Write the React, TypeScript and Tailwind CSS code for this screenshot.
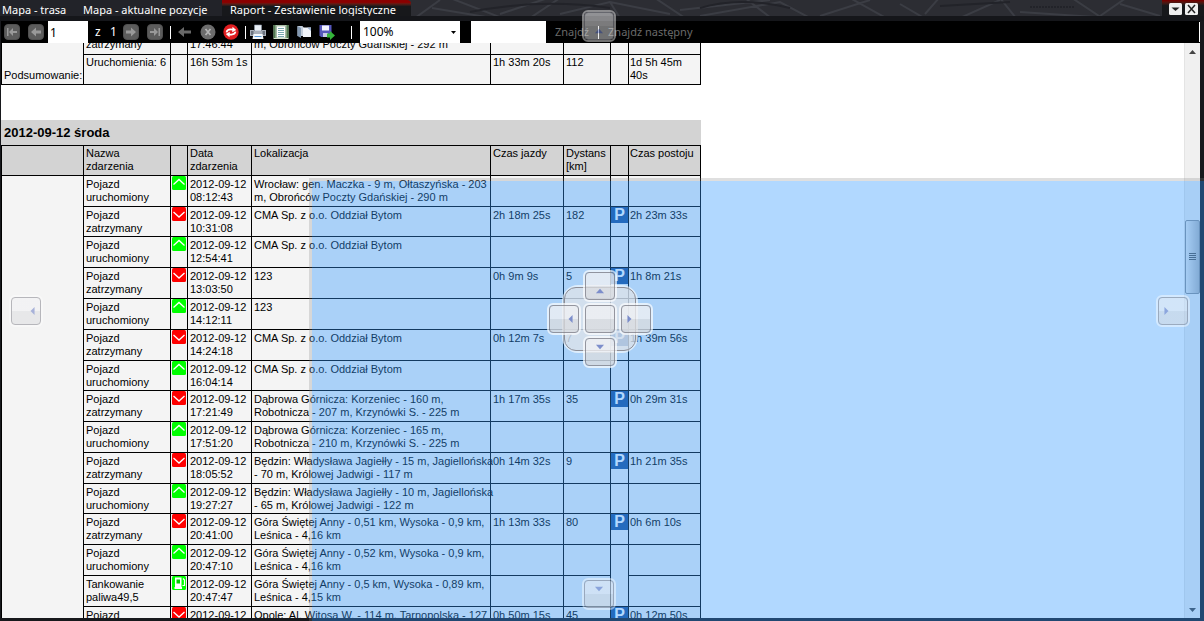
import React from "react";

type EventKind = "start" | "stop" | "fuel";

interface TripEvent {
  kind: EventKind;
  name: [string, string];
  time: string;
  place: string[];
  drive?: string;
  km?: string;
  stay?: string;
  compact?: boolean;
}

const STARTED: [string, string] = ["Pojazd", "uruchomiony"];
const STOPPED: [string, string] = ["Pojazd", "zatrzymany"];

const events: TripEvent[] = [
  { kind: "start", name: STARTED, time: "08:12:43", place: ["Wrocław: gen. Maczka - 9 m, Ołtaszyńska - 203", "m, Obrońców Poczty Gdańskiej - 290 m"] },
  { kind: "stop", name: STOPPED, time: "10:31:08", place: ["CMA Sp. z o.o. Oddział Bytom"], drive: "2h 18m 25s", km: "182", stay: "2h 23m 33s", compact: true },
  { kind: "start", name: STARTED, time: "12:54:41", place: ["CMA Sp. z o.o. Oddział Bytom"] },
  { kind: "stop", name: STOPPED, time: "13:03:50", place: ["123"], drive: "0h 9m 9s", km: "5", stay: "1h 8m 21s" },
  { kind: "start", name: STARTED, time: "14:12:11", place: ["123"] },
  { kind: "stop", name: STOPPED, time: "14:24:18", place: ["CMA Sp. z o.o. Oddział Bytom"], drive: "0h 12m 7s", km: "7", stay: "1h 39m 56s" },
  { kind: "start", name: STARTED, time: "16:04:14", place: ["CMA Sp. z o.o. Oddział Bytom"], compact: true },
  { kind: "stop", name: STOPPED, time: "17:21:49", place: ["Dąbrowa Górnicza: Korzeniec - 160 m,", "Robotnicza - 207 m, Krzynówki S. - 225 m"], drive: "1h 17m 35s", km: "35", stay: "0h 29m 31s" },
  { kind: "start", name: STARTED, time: "17:51:20", place: ["Dąbrowa Górnicza: Korzeniec - 165 m,", "Robotnicza - 210 m, Krzynówki S. - 225 m"] },
  { kind: "stop", name: STOPPED, time: "18:05:52", place: ["Będzin: Władysława Jagiełły - 15 m, Jagiellońska", "- 70 m, Królowej Jadwigi - 117 m"], drive: "0h 14m 32s", km: "9", stay: "1h 21m 35s" },
  { kind: "start", name: STARTED, time: "19:27:27", place: ["Będzin: Władysława Jagiełły - 10 m, Jagiellońska", "- 65 m, Królowej Jadwigi - 122 m"], compact: true },
  { kind: "stop", name: STOPPED, time: "20:41:00", place: ["Góra Świętej Anny - 0,51 km, Wysoka - 0,9 km,", "Leśnica - 4,16 km"], drive: "1h 13m 33s", km: "80", stay: "0h 6m 10s" },
  { kind: "start", name: STARTED, time: "20:47:10", place: ["Góra Świętej Anny - 0,52 km, Wysoka - 0,9 km,", "Leśnica - 4,16 km"] },
  { kind: "fuel", name: ["Tankowanie", "paliwa49,5"], time: "20:47:47", place: ["Góra Świętej Anny - 0,5 km, Wysoka - 0,89 km,", "Leśnica - 4,15 km"] },
  { kind: "stop", name: ["Pojazd", ""], time: "", place: ["Opole: Al. Witosa W. - 114 m, Tarnopolska - 127"], drive: "0h 50m 15s", km: "45", stay: "0h 12m 50s" },
];

const edges = "border-r border-b border-black text-left align-top font-normal whitespace-nowrap";
const headCell = `${edges} pt-px pl-0.5`;
const bodyCell = `${edges} pt-0.5 pl-0.5`;

function Lines({ items }: { items: string[] }) {
  return (
    <>
      {items.map((t, i) => (
        <div key={i}>{t}</div>
      ))}
    </>
  );
}

function Columns() {
  return (
    <colgroup>
      <col className="w-[83px]" />
      <col className="w-[87px]" />
      <col className="w-[17px]" />
      <col className="w-[64px]" />
      <col className="w-[239px]" />
      <col className="w-[73px]" />
      <col className="w-[47px]" />
      <col className="w-[18px]" />
      <col className="w-[72px]" />
    </colgroup>
  );
}

function KindIcon({ kind }: { kind: EventKind }) {
  return (
    <svg viewBox="0 0 14 14" className="block h-3.5 w-3.5" aria-hidden="true">
      <rect width="14" height="14" rx="1.5" fill={kind === "stop" ? "#f00" : "#0f0"} />
      {kind === "start" && <path d="M1.5 8.5 7 3.5l5.500 5" fill="none" stroke="#fff" strokeWidth="1.3" />}
      {kind === "stop" && <path d="M1.5 5 7 10l5.500-5" fill="none" stroke="#fff" strokeWidth="1.3" />}
      {kind === "fuel" && (
        <>
          <path d="M3 1.500h6.500v9.500H3z M2.500 11h7.500v2H2.500z" fill="#fff" />
          <rect x="4.500" y="3.500" width="3.500" height="4" fill="#0c0" />
          <path d="M11 2.500 12.500 4v5.500H10.500" fill="none" stroke="#fff" strokeWidth="1.200" />
        </>
      )}
    </svg>
  );
}

function NavIcon({ d }: { d: string }) {
  return (
    <svg viewBox="0 0 16 16" className="block h-4 w-4" aria-hidden="true">
      <rect x=".5" y=".5" width="15" height="15" rx="3.500" fill="#5c5c5c" stroke="#505050" />
      <path d={d} fill="#999" />
    </svg>
  );
}

function IconButton({ label, children }: { label: string; children: React.ReactNode }) {
  return (
    <button type="button" aria-label={label} className="h-4 w-4 shrink-0">
      {children}
    </button>
  );
}

function Separator() {
  return <span className="h-[13px] w-px shrink-0 bg-white" />;
}

function Toolbar() {
  return (
    <div className="flex h-[22px] shrink-0 items-center overflow-hidden bg-black font-['Noto_Sans',sans-serif] text-[12px] text-white">
      <div className="flex gap-2 pl-[3px]">
        <IconButton label="Pierwsza strona">
          <NavIcon d="M3 4h1.500v8H3z M5 8l4-4v3h4v2H9v3z" />
        </IconButton>
        <IconButton label="Poprzednia strona">
          <NavIcon d="M3 8l5-4.500v3h5v3H8v3z" />
        </IconButton>
      </div>
      <input aria-label="Strona" defaultValue="1" className="ml-1 h-full w-10 rounded-none bg-white pl-0.5 text-black outline-none" />
      <span className="ml-[7px] w-[15px]">z</span>
      <span className="w-[13px]">1</span>
      <div className="flex gap-2">
        <IconButton label="Następna strona">
          <NavIcon d="M13 8L8 3.500v3H3v3h5v3z" />
        </IconButton>
        <IconButton label="Ostatnia strona">
          <NavIcon d="M11.500 4H13v8h-1.500z M11 8L7 4v3H3v2h4v3z" />
        </IconButton>
      </div>
      <div className="flex items-center gap-1.5 pl-[7px]">
        <Separator />
        <div className="flex gap-[7px]">
          <IconButton label="Wstecz">
            <svg viewBox="0 0 16 16" className="block h-4 w-4" aria-hidden="true">
              <path d="M1 8l6-5v3.500h7v3H7V13z" fill="#686868" />
            </svg>
          </IconButton>
          <IconButton label="Zatrzymaj">
            <svg viewBox="0 0 16 16" className="block h-4 w-4" aria-hidden="true">
              <circle cx="8" cy="8" r="7.500" fill="#6c6c6c" />
              <path d="M5.500 5l5 6M10.500 5l-5 6" stroke="#b5b5b5" strokeWidth="1.700" />
            </svg>
          </IconButton>
          <IconButton label="Odśwież">
            <svg viewBox="0 0 16 16" className="block h-4 w-4" aria-hidden="true">
              <circle cx="8" cy="8" r="7.700" fill="#e01d20" />
              <g fill="none" stroke="#fff" strokeWidth="1.700">
                <path d="M3.500 8.300C4 5.500 6 5 10 5.700" />
                <path d="M12.500 7.700C12 10.500 10 11 6 10.300" />
              </g>
              <path d="M9.500 2.800l3.700 3.200-4 2.200zM6.500 13.200L2.800 10l4-2.200z" fill="#fff" />
            </svg>
          </IconButton>
        </div>
        <Separator />
      </div>
      <div className="flex gap-[7px] pl-1">
        <IconButton label="Drukuj">
          <svg viewBox="0 0 16 16" className="block h-4 w-4" aria-hidden="true">
            <path d="M4.500 1h7v6h-7z" fill="#e8eef5" stroke="#8d98a8" strokeWidth=".6" />
            <path d="M0 6h4v1h8V6h4v6H0z" fill="#a9b0ba" />
            <path d="M1 7h2.500v4H1zM12.500 7H15v4h-2.500z" fill="#6c747f" />
            <path d="M3.500 10h9l1 5h-11z" fill="#f4f8fb" />
            <path d="M4.500 12.500h7" stroke="#5797d8" />
          </svg>
        </IconButton>
        <IconButton label="Układ wydruku">
          <svg viewBox="0 0 16 16" className="block h-4 w-4" aria-hidden="true">
            <path d="M.5 1h15v13H.5z" fill="#b9cbb2" />
            <path d="M.5 1h2v13h-2zM13.500 1h2v13h-2z" fill="#4f7950" />
            <path d="M3.500 2h9v12h-9z" fill="#fff" stroke="#7f9c86" strokeWidth=".6" />
            <path d="M5 4.500h6M5 6.500h6M5 8.500h6M5 10.500h6M5 12.500h6" stroke="#6ba0a8" strokeWidth=".9" />
            <path d="M.5 14.500h15" stroke="#d4e3cf" />
          </svg>
        </IconButton>
        <IconButton label="Ustawienia strony">
          <svg viewBox="0 0 16 16" className="block h-4 w-4" aria-hidden="true">
            <path d="M1.500 2h5l1 1.500V12h-6z" fill="#c3cddb" />
            <path d="M1.500 2l3.500 2v10l-3.500-2z" fill="#8399b1" />
            <path d="M7 3.500h8V13H7z" fill="#f1f4fa" />
            <path d="M7 3.500h4l4 3.500V3.500z" fill="#9db2cf" />
          </svg>
        </IconButton>
        <IconButton label="Eksportuj">
          <svg viewBox="0 0 16 16" className="block h-4 w-4" aria-hidden="true">
            <path d="M.5 1h12v12H2L.5 11.500z" fill="#5657bb" />
            <path d="M3 1.500h7v5H3z" fill="#f3f4ff" />
            <path d="M4 9h5v4H4z" fill="#c8cbe8" />
            <path d="M8 9.500h3V7l5 4.500-5 4.500v-2.500H8z" fill="#35b53a" />
          </svg>
        </IconButton>
      </div>
      <div className="flex h-full items-center pl-4">
        <Separator />
        <div className="relative ml-2 h-full w-[100px]">
          <select aria-label="Powiększenie" className="h-full w-full appearance-none rounded-none bg-white pl-[3px] text-black">
            <option>100%</option>
          </select>
          <svg viewBox="0 0 5 3" className="pointer-events-none absolute top-[10px] right-1 h-[3px] w-[5px]" aria-hidden="true">
            <path d="M0 0h5L2.500 3z" fill="#000" />
          </svg>
        </div>
        <input aria-label="Szukany tekst" className="ml-[11px] h-full w-[75px] rounded-none bg-white px-1 text-black outline-none" />
      </div>
      <div className="flex items-center gap-[9px] pl-[9px] text-[11px] text-[#6a6a6a]">
        <button type="button">Znajdź</button>
        <Separator />
        <button type="button">Znajdź następny</button>
      </div>
      <span className="ml-auto h-5 w-px bg-white" />
    </div>
  );
}

function TitleBar() {
  return (
    <div className="relative flex h-[21px] shrink-0 justify-between overflow-hidden border-b-[5px] border-[#15161a] bg-[#2c2d33] font-['Noto_Sans',sans-serif] text-[11px] text-white">
      <svg viewBox="0 0 1204 16" preserveAspectRatio="xMidYMid slice" className="absolute inset-0 h-full w-full" aria-hidden="true">
        <g fill="none" stroke="#3b3d44" strokeWidth="2">
          <path d="M415 18L440 0M432 8l60 10M450-2l52 20M500 14l48-16M530 18l30-20M560 14l50-12 60 12M610 2l10 16M655-2l30 20M680 10l90-10M700 16l80-14 30 16M745-2l26 20M820 16l50-16M850-2l36 20M900 4l24 14M925 14l14-16M960 18l40-18M1000-2l16 20M1020 12l90 6M1072-2l30 20M1100 16l26-18M1120 4l40 12" />
          <path d="M20-2l30 20M90 18l40-20M150-2l20 20" />
        </g>
        <g fill="none" stroke="#222329" strokeWidth="2">
          <path d="M470 12q70-14 140-4M700 8q40-12 90 0M940 6l70-4" />
          <path d="M1030 7h44" strokeDasharray="2 1" />
        </g>
      </svg>
      <nav className="relative flex h-full">
        <div className="flex bg-[#222329]">
          <a href="#trasa" className="w-[81px] pl-0.5 leading-[19px] whitespace-nowrap">Mapa - trasa</a>
          <a href="#pozycje" className="w-[141px] pl-0.5 leading-[19px] whitespace-nowrap">Mapa - aktualne pozycje</a>
        </div>
        <a href="#raport" aria-current="page" className="w-[189px] rounded-tr bg-linear-to-b from-[#8a0000] from-15% to-[#17181b] to-40% pl-2 leading-[19px] whitespace-nowrap">
          Raport - Zestawienie logistyczne
        </a>
      </nav>
      <div className="relative flex h-full items-end gap-[3px] bg-linear-to-b from-[#700000] from-5% to-[#17181b] to-35% pr-1.5 pb-px pl-[7px]">
        <button type="button" aria-label="Lista kart">
          <svg viewBox="0 0 13 12" className="block h-3 w-[13px]" aria-hidden="true">
            <rect width="13" height="12" rx="1.500" fill="#eee" />
            <path d="M2.500 4.500h8L6.500 8z" fill="#222" />
          </svg>
        </button>
        <button type="button" aria-label="Zamknij">
          <svg viewBox="0 0 13 12" className="block h-3 w-[13px]" aria-hidden="true">
            <rect width="13" height="12" rx="1.500" fill="#eee" />
            <path d="M3 2l7 8M10 2L3 10" stroke="#222" strokeWidth="1.500" />
          </svg>
        </button>
      </div>
    </div>
  );
}

function Report() {
  return (
    <div className="-mt-[5px] w-[700px] shrink-0 font-['Liberation_Sans',sans-serif] text-[11px] leading-[13px] text-black">
      <table className="w-full table-fixed border-separate border-spacing-0 bg-[#f4f4f4]">
        <Columns />
        <tbody>
          <tr>
            <td rowSpan={2} className="border-r border-b border-l border-black pb-0.5 pl-0.5 align-bottom">Podsumowanie:</td>
            <td className={`${edges} h-[17px] pl-0.5`}>zatrzymany</td>
            <td className={edges} />
            <td className={`${edges} pl-0.5`}>17:46:44</td>
            <td className={`${edges} pl-0.5`}>m, Obrońców Poczty Gdańskiej - 292 m</td>
            <td className={edges} />
            <td className={edges} />
            <td className={edges} />
            <td className={edges} />
          </tr>
          <tr>
            <td className={`${headCell} h-[30px]`}>Uruchomienia: 6</td>
            <td className={headCell} />
            <td className={headCell}>16h 53m 1s</td>
            <td className={headCell} />
            <td className={headCell}>1h 33m 20s</td>
            <td className={headCell}>112</td>
            <td className={headCell} />
            <td className={`${edges} pt-px pl-px`}><Lines items={["1d 5h 45m", "40s"]} /></td>
          </tr>
        </tbody>
      </table>
      <h2 className="mt-[35px] flex h-[25px] items-center bg-[#d3d3d3] pl-[3px] text-[13px] font-bold">2012-09-12 środa</h2>
      <table className="w-full table-fixed border-separate border-spacing-0 border-t border-black bg-[#f4f4f4]">
        <Columns />
        <thead className="bg-[#d3d3d3]">
          <tr>
            <th className={`${headCell} h-[30px] border-l`} />
            <th className={headCell}><Lines items={["Nazwa", "zdarzenia"]} /></th>
            <th className={headCell} />
            <th className={headCell}><Lines items={["Data", "zdarzenia"]} /></th>
            <th className={headCell}>Lokalizacja</th>
            <th className={headCell}>Czas jazdy</th>
            <th className={headCell}><Lines items={["Dystans", "[km]"]} /></th>
            <th className={headCell} />
            <th className={`${edges} pt-px pl-px`}>Czas postoju</th>
          </tr>
        </thead>
        <tbody>
          {events.map((e, i) => (
            <tr key={i}>
              {i === 0 && <td rowSpan={events.length} className="border-r border-l border-black" />}
              <td className={`${bodyCell} ${e.compact ? "h-[30px]" : "h-[31px]"}`}><Lines items={e.name} /></td>
              <td className="border-r border-b border-black pl-px align-top"><KindIcon kind={e.kind} /></td>
              <td className={bodyCell}><Lines items={["2012-09-12", e.time]} /></td>
              <td className={bodyCell}><Lines items={e.place} /></td>
              <td className={bodyCell}>{e.drive}</td>
              <td className={bodyCell}>{e.km}</td>
              <td className={`border-r border-black align-top ${events[i + 1]?.kind === "fuel" ? "" : "border-b"}`}>
                {e.stay && <div className="h-4 bg-[#1c4f96] text-center text-[16px] leading-4 font-bold text-white">P</div>}
              </td>
              <td className={`${edges} pt-0.5 pl-px`}>{e.stay}</td>
            </tr>
          ))}
        </tbody>
      </table>
    </div>
  );
}

function ScrollBar() {
  return (
    <div className="flex w-4 shrink-0 flex-col items-center border-l border-[#e4e4e4] bg-[#f0f0f0] pt-[7px] pb-1.5">
      <svg viewBox="0 0 7 4" className="h-1 w-[7px]" aria-hidden="true">
        <path d="M0 4h7L3.500 0z" fill="#444" />
      </svg>
      <div className="grow-[166]" />
      <div className="flex h-[74px] w-full flex-col items-center justify-center gap-px rounded-xs border border-[#8c9096] bg-linear-to-r from-[#ededed] to-[#b4b8bd]">
        <span className="h-px w-[7px] bg-[#555]" />
        <span className="h-px w-[7px] bg-[#555]" />
        <span className="h-px w-[7px] bg-[#555]" />
        <span className="h-px w-[7px] bg-[#555]" />
      </div>
      <div className="grow-[315]" />
      <svg viewBox="0 0 7 4" className="h-1 w-[7px]" aria-hidden="true">
        <path d="M0 0h7L3.500 4z" fill="#444" />
      </svg>
    </div>
  );
}

type Direction = "up" | "down" | "left" | "right" | "fill";

const arrowPath: Record<Direction, string> = {
  up: "M11 22h9l-4.500-5z",
  down: "M11 6h9l-4.500 5z",
  left: "M25 9.500v9L20.500 14z",
  right: "M6 9.500v9L10.500 14z",
  fill: "",
};

function DockButton({ dir, label }: { dir: Direction; label: string }) {
  return (
    <button type="button" aria-label={label} className="block h-8 w-[34px] rounded-md border-2 border-white/75">
      <span className="block h-full w-full rounded border border-[#8e8e96] bg-linear-to-b from-[#f2f2f4]/85 from-50% to-[#dcdde0]/85 to-52%">
        <svg viewBox="0 0 31 28" className="h-full w-full" aria-hidden="true">
          <path d={arrowPath[dir]} fill="#7486c8" />
        </svg>
      </span>
    </button>
  );
}

export default function App() {
  return (
    <div className="relative flex h-screen flex-col overflow-hidden bg-[#17181c]">
      <TitleBar />
      <main className="mr-1 mb-[3px] ml-px flex min-h-0 flex-1 flex-col">
        <Toolbar />
        <div className="flex min-h-0 flex-1 bg-white">
          <div className="flex-1 overflow-hidden">
            <Report />
          </div>
          <ScrollBar />
        </div>
      </main>

      {/* docking preview and guides float above the report */}
      <div className="pointer-events-none absolute top-[178px] right-0 bottom-0 left-[309px] border-t-3 border-l-3 border-[#808080]/25 bg-[#3399ff]/38 bg-clip-padding" />
      <div className="absolute top-[10px] left-[582px] opacity-60">
        <DockButton dir="up" label="Dokuj u góry" />
      </div>
      <div className="absolute bottom-[11px] left-[582px] opacity-60">
        <DockButton dir="down" label="Dokuj na dole" />
      </div>
      <div className="absolute top-1/2 left-[9px] -translate-y-1/2 opacity-60">
        <DockButton dir="left" label="Dokuj z lewej" />
      </div>
      <div className="absolute top-1/2 right-[14px] -translate-y-1/2 opacity-60">
        <DockButton dir="right" label="Dokuj z prawej" />
      </div>
      <div className="pointer-events-none absolute top-[20px] right-[5px] bottom-[3px] left-0 grid place-items-center">
        <div className="relative grid place-items-center">
          <div className="absolute h-[68px] w-[76px] rounded-2xl border-2 border-white/60">
            <div className="h-full w-full rounded-xl border border-[#8e8e96] bg-[#dfe3ea]/75" />
          </div>
          <div className="pointer-events-auto relative grid grid-cols-3 gap-x-0.5 gap-y-px opacity-90">
            <div className="col-start-2"><DockButton dir="up" label="Podziel w górę" /></div>
            <div className="col-start-1 row-start-2"><DockButton dir="left" label="Podziel w lewo" /></div>
            <div className="col-start-2 row-start-2"><DockButton dir="fill" label="Dodaj jako kartę" /></div>
            <div className="col-start-3 row-start-2"><DockButton dir="right" label="Podziel w prawo" /></div>
            <div className="col-start-2 row-start-3"><DockButton dir="down" label="Podziel w dół" /></div>
          </div>
        </div>
      </div>
    </div>
  );
}
